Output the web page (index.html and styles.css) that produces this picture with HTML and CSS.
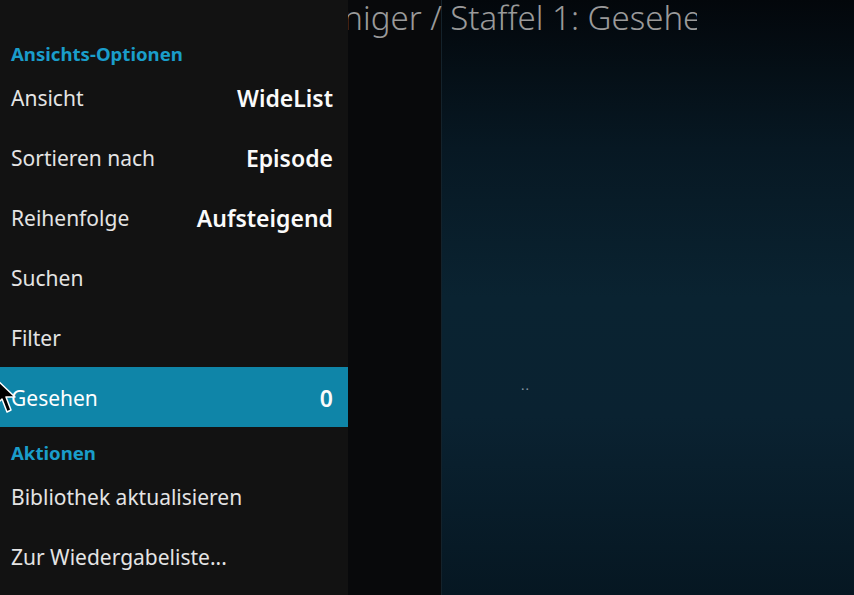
FILE: index.html
```html
<!DOCTYPE html>
<html lang="de">
<head>
<meta charset="UTF-8" />
<meta name="viewport" content="width=device-width, initial-scale=1" />
<title>Staffel 1: Gesehen</title>
<link rel="stylesheet" href="styles.css">
</head>
<body>
<div class="stage">
  <div class="shade"></div>
  <div class="view">
    <span class="dots">..</span>
  </div>
</div>

<div class="title-bar">
  <span class="title">Peiniger / Staffel 1: Gesehen</span>
</div>

<!-- Seitenmenü -->
<div class="sidebar">
  <div class="group">Ansichts-Optionen</div>
  <div class="row"><span>Ansicht</span><b>WideList</b></div>
  <div class="row"><span>Sortieren nach</span><b>Episode</b></div>
  <div class="row"><span>Reihenfolge</span><b>Aufsteigend</b></div>
  <div class="row"><span>Suchen</span></div>
  <div class="row"><span>Filter</span></div>
  <div class="row focus"><span>Gesehen</span><b>0</b></div>
  <div class="group">Aktionen</div>
  <div class="row"><span>Bibliothek aktualisieren</span></div>
  <div class="row"><span>Zur Wiedergabeliste...</span></div>
</div>

<svg class="pointer" width="20" height="36" viewBox="0 0 20 36">
  <path d="M-4 1 L-4 27 L2 21 L7 34 L11 32 L6 19 L15 19 Z" fill="#000" stroke="#fff" stroke-width="1.5" stroke-linejoin="round"/>
</svg>
</body>
</html>
```

FILE: styles.css
```css
body {
  margin: 0;
  width: 854px;
  height: 595px;
  overflow: hidden;
  background: #000;
  font-family: "Noto Sans", "Open Sans", sans-serif;
  color: #e6e6e6;
}
.stage {
  display: flex;
  height: 595px;
}
.shade {
  width: 441px;
  background: linear-gradient(90deg, #050506 0, #08090b 6%, #08090b 100%);
  border-right: 1px solid #14222b;
}
.view {
  flex: 1;
  position: relative;
  background: linear-gradient(180deg, #03070b 0%, #071823 25%, #0a2331 50%, #0a2231 70%, #061722 100%);
}
.dots {
  position: absolute;
  left: 79px;
  top: 376px;
  font-size: 13px;
  color: #8a9aa4;
  letter-spacing: 1px;
}
.title-bar {
  position: absolute;
  top: 0;
  left: 300px;
  width: 397px;
  height: 50px;
  overflow: hidden;
}
.title {
  display: block;
  white-space: nowrap;
  font-size: 33px;
  font-weight: 300;
  color: #9a9a9a;
  line-height: 36px;
  text-indent: -2px;
}
.sidebar {
  position: absolute;
  top: 0;
  left: 0;
  width: 348px;
  height: 595px;
  padding-top: 28px;
  box-sizing: border-box;
  background: #121212;
}
.group {
  height: 39px;
  padding: 12px 0 0 11px;
  box-sizing: border-box;
  line-height: 28px;
  font-size: 18.6px;
  font-weight: bold;
  color: #1a9dca;
}
.row {
  display: flex;
  justify-content: space-between;
  align-items: center;
  height: 60px;
  padding: 1px 15px 0 11px;
  box-sizing: border-box;
  font-size: 21px;
  color: #e4e4e4;
}
.row b {
  font-size: 23px;
  font-weight: 600;
  color: #fafafa;
}
.row.focus {
  background: #0f85a8;
  color: #fff;
}
.pointer {
  position: absolute;
  left: 0;
  top: 378px;
}
```
